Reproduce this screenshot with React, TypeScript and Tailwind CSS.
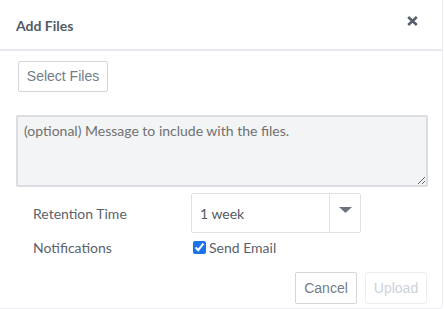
import React from "react";

export default function App() {
  return (
    <div className="w-[444px] h-[309px] bg-white overflow-hidden">
      <div className="w-[443px] h-[309px] bg-white border-r border-b border-[#eceef2] rounded-br-[4px] flex flex-col font-['Lato','Liberation_Sans',sans-serif]">
        {/* Header */}
        <div className="h-[51px] border-b-2 border-[#e8e9ee] flex items-start justify-between pl-[16px] pr-[24px]">
          <div className="mt-[17px] text-[14px] leading-[18px] font-bold text-[#535b67]">Add Files</div>
          <button className="mt-[16px] w-[11px] h-[10px] flex items-center justify-center">
            <svg width="11" height="10" viewBox="0 0 11 10">
              <path d="M1.2 1 L9.8 9 M9.8 1 L1.2 9" stroke="#56606e" strokeWidth="2.6" strokeLinecap="butt" />
            </svg>
          </button>
        </div>

        {/* Body */}
        <div className="flex flex-col pl-[16px] pr-[15px]">
          <div className="mt-[10px] pl-[2px]">
            <button className="w-[90px] h-[31px] border border-[#d4d7dc] rounded-[2px] bg-white text-[14px] text-[#737c88] font-['Liberation_Sans',Arial,sans-serif] flex items-center justify-center">
              Select Files
            </button>
          </div>

          <textarea
            className="mt-[23px] w-[412px] h-[72px] border-2 border-[#dcdde0] rounded-[2px] bg-[#f3f4f6] px-[6px] pt-[4px] text-[14px] leading-[20px] text-[#666] placeholder:text-[#707070] outline-none font-['Lato',sans-serif]"
            placeholder="(optional) Message to include with the files."
          />

          <div className="mt-[6px] flex items-center pl-[17px]">
            <div className="w-[158px] text-[14px] text-[#5c626b]">Retention Time</div>
            <div className="w-[170px] h-[40px] border border-[#dfe1e5] rounded-[2px] flex items-stretch">
              <div className="flex-1 flex items-center pl-[8px] text-[14px] text-[#545a63]">1 week</div>
              <div className="w-[31px] border-l border-[#dfe1e5] flex items-start justify-center pt-[13px]">
                <svg width="13" height="6" viewBox="0 0 13 6">
                  <path d="M0 0 L13 0 L6.5 6 Z" fill="#6b727c" />
                </svg>
              </div>
            </div>
          </div>

          <div className="mt-[6px] flex items-center pl-[17px] h-[16px]">
            <div className="w-[158px] text-[14px] text-[#5c626b]">Notifications</div>
            <label className="flex items-center text-[14px] text-[#5c626b]">
              <input type="checkbox" defaultChecked className="w-[13px] h-[13px] m-0 mr-[3px] ml-[2px] accent-[#1a73e8]" />
              Send Email
            </label>
          </div>

          <div className="mt-[17px] flex justify-end gap-[8px]">
            <button className="w-[62px] h-[32px] border border-[#d4d7dc] rounded-[2px] bg-white text-[14px] text-[#737c88] font-['Liberation_Sans',Arial,sans-serif]">
              Cancel
            </button>
            <button disabled className="w-[62px] h-[32px] border border-[#eceef1] rounded-[2px] bg-white text-[14px] text-[#cdd2d9] font-['Liberation_Sans',Arial,sans-serif]">
              Upload
            </button>
          </div>
        </div>
      </div>
    </div>
  );
}
